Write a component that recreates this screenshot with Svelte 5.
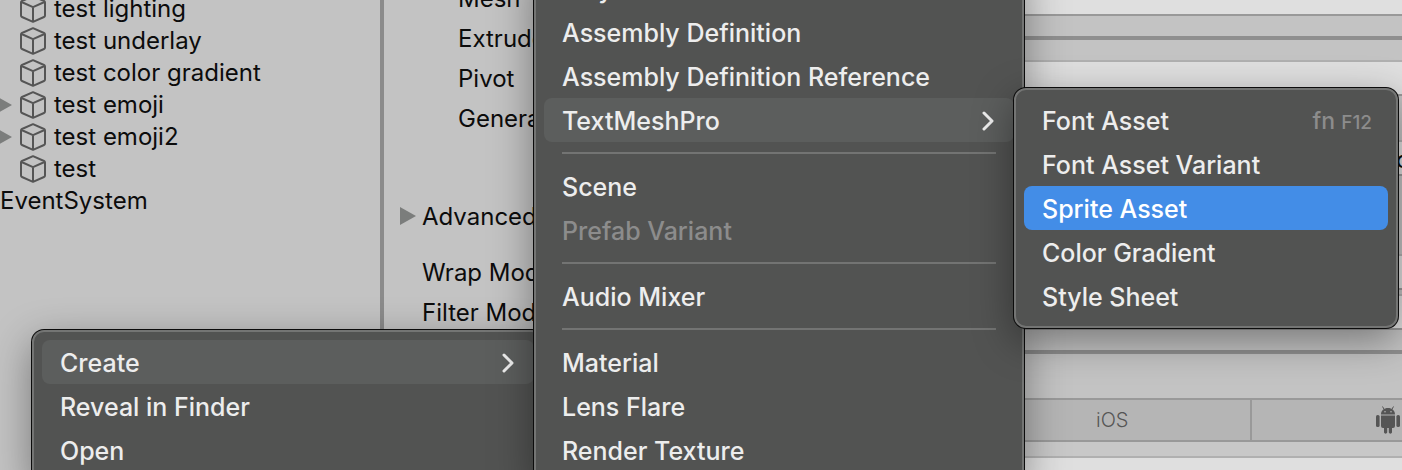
<script lang="ts">
    type MenuItem = {
        label?: string;
        shortcut?: string;
        submenu?: boolean;
        disabled?: boolean;
        separator?: boolean;
    };

    let hierarchy = [
        { name: "test lighting", cube: true },
        { name: "test underlay", cube: true },
        { name: "test color gradient", cube: true },
        { name: "test emoji", cube: true, foldable: true },
        { name: "test emoji2", cube: true, foldable: true },
        { name: "test", cube: true },
        { name: "EventSystem" }
    ];

    let spriteSettings = ["Mesh Type", "Extrude Edges", "Pivot", "Generate Physics"];
    let textureSettings = ["Wrap Mode", "Filter Mode"];

    let assetMenu: MenuItem[] = [
        { label: "Create", submenu: true },
        { label: "Reveal in Finder" },
        { label: "Open" }
    ];

    let createMenu: MenuItem[] = [
        { label: "Playables" },
        { label: "Assembly Definition" },
        { label: "Assembly Definition Reference" },
        { label: "TextMeshPro", submenu: true },
        { separator: true },
        { label: "Scene" },
        { label: "Prefab Variant", disabled: true },
        { separator: true },
        { label: "Audio Mixer" },
        { separator: true },
        { label: "Material" },
        { label: "Lens Flare" },
        { label: "Render Texture" }
    ];

    let textMeshMenu: MenuItem[] = [
        { label: "Font Asset", shortcut: "F12" },
        { label: "Font Asset Variant" },
        { label: "Sprite Asset" },
        { label: "Color Gradient" },
        { label: "Style Sheet" }
    ];

    let selected = $state("Sprite Asset");
</script>

{#snippet menu(items: MenuItem[], name: string)}
    <div class="menu {name}" role="menu">
        {#each items as item}
            {#if item.separator}
                <hr />
            {:else}
                <button
                    role="menuitem"
                    class="menu-item"
                    class:open={item.submenu}
                    class:selected={selected === item.label}
                    disabled={item.disabled}
                    onclick={() => (selected = item.label ?? "")}>
                    <span>{item.label}</span>
                    {#if item.submenu}
                        <svg class="chevron" viewBox="0 0 12 20" aria-hidden="true">
                            <path d="M2 2 L10 10 L2 18" />
                        </svg>
                    {/if}
                    {#if item.shortcut}
                        <span class="shortcut">fn <small>{item.shortcut}</small></span>
                    {/if}
                </button>
            {/if}
        {/each}
    </div>
{/snippet}

<main class="editor">
    <section class="hierarchy">
        <ul>
            {#each hierarchy as item}
                <li>
                    {#if item.cube}
                        <span class="fold">
                            {#if item.foldable}
                                <svg class="arrow" viewBox="0 0 16 18"><path d="M0 0 L16 9 L0 18 Z" /></svg>
                            {/if}
                        </span>
                        <svg class="cube" viewBox="0 0 26 28" aria-hidden="true">
                            <path d="M13 1.2 L24 6 Q25 6.5 25 7.5 V20.5 Q25 21.6 24 22 L13 26.8 L2 22 Q1 21.6 1 20.5 V7.5 Q1 6.5 2 6 Z M1.5 7 L13 12.2 L24.5 7 M13 12.2 V26.5" />
                        </svg>
                    {/if}
                    <span class="name">{item.name}</span>
                </li>
            {/each}
        </ul>
    </section>

    <section class="settings">
        <ul class="nested">
            {#each spriteSettings as label}
                <li>{label}</li>
            {/each}
        </ul>
        <div class="advanced">
            <svg class="arrow" viewBox="0 0 16 18"><path d="M0 0 L16 9 L0 18 Z" /></svg>
            Advanced
        </div>
        <ul>
            {#each textureSettings as label}
                <li>{label}</li>
            {/each}
        </ul>
    </section>

    <section class="values">
        <div class="field top"></div>
        <div class="gap"></div>
        <div class="field header"></div>
        <div class="stack">
            <div class="field value">o</div>
            <div class="field wrap"></div>
            <div class="field filter"></div>
        </div>
        <div class="gap platform-gap"></div>
        <div class="platforms">
            <button class="ios">iOS</button>
            <button class="android" aria-label="Android">
                <svg viewBox="0 0 24 28" aria-hidden="true">
                    <path d="M5 8.5 C5 4.5 8 2 12 2 S19 4.5 19 8.5 Z M5 9.5 H19 V20 Q19 22 17 22 H16 V26.5 A1.7 1.7 0 0 1 12.8 26.5 V22 H11.2 V26.5 A1.7 1.7 0 0 1 8 26.5 V22 H7 Q5 22 5 20 Z" />
                    <rect x="0" y="9" width="3.6" height="12" rx="1.6" />
                    <rect x="20.4" y="9" width="3.6" height="12" rx="1.6" />
                    <path class="antenna" d="M8.2 3.5 L6.5 0.5 M15.8 3.5 L17.5 0.5" />
                    <circle class="eye" cx="9" cy="5.8" r="0.8" />
                    <circle class="eye" cx="15" cy="5.8" r="0.8" />
                </svg>
            </button>
        </div>
        <div class="gap bottom-gap"></div>
        <div class="field rest"></div>
    </section>

    {@render menu(assetMenu, "asset-menu")}
    {@render menu(createMenu, "create-menu")}
    {@render menu(textMeshMenu, "text-menu")}
</main>

<style>
    :global(body) {
        margin: 0;
        overflow: hidden;
    }

    .editor {
        position: relative;
        display: grid;
        grid-template-columns: 380px 644px 1fr;
        height: 100vh;
        overflow: hidden;
        background: #c3c3c3;
        color: #0c0c0c;
        font-family: Inter, "Liberation Sans", sans-serif;
        font-size: 24px;
    }

    ul {
        list-style: none;
        margin: 0;
        padding: 0;
    }

    .hierarchy ul {
        margin-top: -7px;
    }

    .hierarchy li {
        display: flex;
        align-items: center;
        height: 32px;
        white-space: nowrap;
    }

    .name {
        padding-bottom: 2px;
    }

    .fold {
        display: flex;
        width: 20px;
    }

    .arrow {
        width: 16px;
        height: 18px;
        fill: #7b7d7c;
    }

    .fold .arrow {
        margin-left: -4px;
    }

    .cube {
        width: 26px;
        height: 28px;
        margin-right: 8px;
        fill: none;
        stroke: #555;
        stroke-width: 2;
        stroke-linejoin: round;
    }

    .settings {
        border-left: 4px solid #8b8b8b;
    }

    .settings ul {
        padding-left: 38px;
    }

    .settings ul.nested {
        margin-top: -21px;
        padding-left: 74px;
    }

    .settings li {
        width: 114px;
        height: 40px;
        line-height: 40px;
        overflow: hidden;
        white-space: nowrap;
    }

    .settings .nested li {
        width: 78px;
    }

    .advanced {
        display: flex;
        align-items: center;
        gap: 6px;
        height: 40px;
        margin: 57px 0 17px;
        padding-left: 16px;
    }

    .values {
        display: flex;
        flex-direction: column;
    }

    .field {
        background: #dfdfdf;
        border-bottom: 2px solid #999;
    }

    .field.top {
        height: 14px;
    }

    .gap {
        height: 20px;
        border-bottom: 4px solid #8f8f8f;
    }

    .field.header {
        height: 32px;
        margin-top: 20px;
        border-top: 2px solid #b0b0b0;
    }

    .field.rest {
        flex: 1;
        border: none;
    }

    .stack {
        display: flex;
        flex-direction: column;
        padding: 44px 0 20px;
        border-bottom: 4px solid #8f8f8f;
    }

    .stack .field {
        height: 32px;
        border-top: 2px solid #b0b0b0;
    }

    .stack .value {
        padding-left: 372px;
        line-height: 36px;
        overflow: hidden;
    }

    .stack .wrap {
        margin-top: 78px;
    }

    .stack .filter {
        margin-top: 4px;
    }

    .platform-gap {
        height: 44px;
        border-bottom: 2px solid #999;
    }

    .platforms {
        display: flex;
        height: 40px;
        background: #b5b5b5;
        border-bottom: 2px solid #999;
    }

    .platforms button {
        display: flex;
        align-items: center;
        padding: 0;
        border: none;
        background: none;
        color: #555;
        font-family: inherit;
        font-size: 20px;
        font-weight: 300;
    }

    .platforms .ios {
        box-sizing: border-box;
        width: 228px;
        padding-left: 72px;
        border-right: 2px solid #999;
    }

    .platforms .android {
        flex: 1;
        padding-left: 124px;
    }

    .android svg {
        flex: none;
        width: 24px;
        height: 28px;
        fill: #555;
    }

    .antenna {
        stroke: #555;
        stroke-width: 1;
    }

    .eye {
        fill: #b5b5b5;
    }

    .bottom-gap {
        height: 14px;
        background: #c8c8c8;
        border-bottom: 2px solid #b0b0b0;
    }

    .menu {
        position: absolute;
        box-sizing: border-box;
        padding: 8px;
        background: #525352;
        border: 2px solid #747574;
        box-shadow: 0 0 0 1px #0c0c0c, 0 12px 40px rgba(0, 0, 0, 0.4);
    }

    .asset-menu {
        top: 330px;
        left: 32px;
        width: 512px;
        border-radius: 12px;
    }

    .create-menu {
        top: -42px;
        left: 534px;
        width: 490px;
        border-top: none;
    }

    .text-menu {
        top: 88px;
        left: 1014px;
        width: 384px;
        border-radius: 12px;
    }

    .menu-item {
        display: flex;
        align-items: center;
        justify-content: space-between;
        width: 100%;
        height: 44px;
        padding: 2px 16px 0 18px;
        border: none;
        border-radius: 8px;
        background: none;
        color: #ededed;
        font-family: inherit;
        font-size: 25px;
        font-weight: 500;
        text-align: left;
        white-space: nowrap;
    }

    .menu-item.open {
        background: #5c5e5d;
    }

    .menu-item.selected {
        background: #438de7;
        color: #fff;
    }

    .menu-item:disabled {
        color: #8c8c8c;
    }

    .chevron {
        width: 12px;
        height: 20px;
        margin-right: 4px;
        fill: none;
        stroke: #ededed;
        stroke-width: 3;
        stroke-linecap: round;
        stroke-linejoin: round;
    }

    .shortcut {
        color: #8c8c8c;
        font-size: 23px;
    }

    .shortcut small {
        font-size: 19px;
    }

    hr {
        height: 2px;
        margin: 10px 18px;
        border: none;
        background: #737473;
    }
</style>
